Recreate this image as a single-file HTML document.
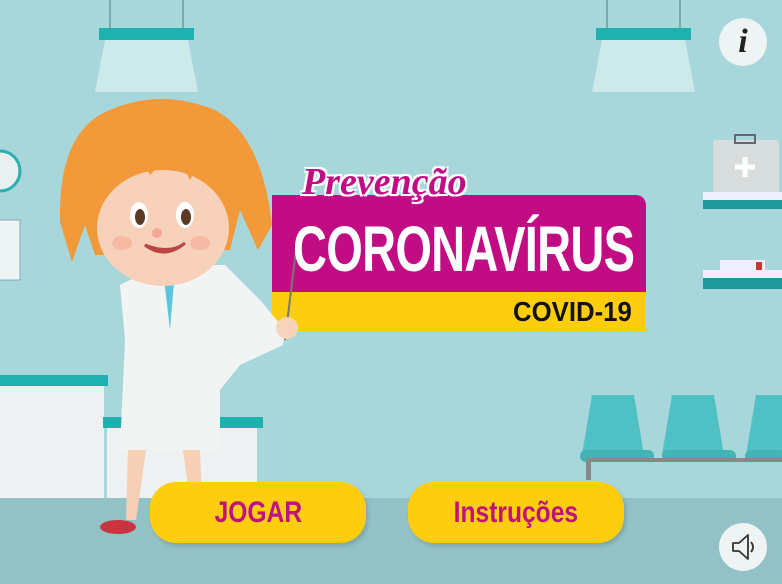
<!DOCTYPE html>
<html><head><meta charset="utf-8"><style>
body{margin:0;width:782px;height:584px;overflow:hidden;background:#a7d7da;position:relative;font-family:"Liberation Sans",sans-serif}
.a{position:absolute}
.btn{position:absolute;top:482px;width:216px;height:61px;background:#fecd0e;border-radius:26px;color:#c0127f;font-weight:bold;font-size:30px;text-align:center;line-height:61px;box-shadow:2px 3px 4px rgba(0,0,0,.15)}
.btn span{display:inline-block;transform:scaleX(.82)}
.circ{position:absolute;width:48px;height:48px;border-radius:50%;background:#eef3f3}
</style></head><body>
<div class="a" style="left:0;top:498px;width:782px;height:86px;background:#93c2c6"></div>
<svg class="a" style="left:0;top:0" width="782" height="584">
<g stroke="#7aa" stroke-width="2"><line x1="110" y1="0" x2="110" y2="30"/><line x1="183" y1="0" x2="183" y2="30"/><line x1="607" y1="0" x2="607" y2="30"/><line x1="680" y1="0" x2="680" y2="30"/></g>
<rect x="99" y="28" width="95" height="12" fill="#1fb0b0"/><polygon points="105,40 188,40 198,92 95,92" fill="#d7efef" opacity=".8"/>
<rect x="596" y="28" width="95" height="12" fill="#1fb0b0"/><polygon points="602,40 685,40 695,92 592,92" fill="#d7efef" opacity=".8"/>
<circle cx="0" cy="171" r="20" fill="#e8f0f0" stroke="#2ab0b0" stroke-width="3"/>
<rect x="-2" y="220" width="22" height="60" fill="#eef3f3" stroke="#8ab" stroke-width="1"/>
<rect x="0" y="375" width="108" height="11" fill="#1fb0b0"/><rect x="0" y="386" width="104" height="112" fill="#eef1f1"/>
<rect x="103" y="417" width="160" height="11" fill="#1fb0b0"/><rect x="107" y="428" width="150" height="70" fill="#eef1f1"/>
<rect x="713" y="140" width="66" height="56" rx="3" fill="#d7dcdc"/><rect x="735" y="135" width="20" height="8" fill="none" stroke="#667" stroke-width="2"/>
<path d="M745 157v20M735 167h20" stroke="#fff" stroke-width="5"/>
<rect x="703" y="192" width="79" height="8" fill="#eef"/><rect x="703" y="200" width="79" height="9" fill="#1e9898"/>
<rect x="720" y="260" width="45" height="12" fill="#eef"/><rect x="756" y="262" width="6" height="10" fill="#c33"/>
<rect x="703" y="270" width="79" height="8" fill="#eef"/><rect x="703" y="278" width="79" height="11" fill="#1e9898"/>
<g fill="#4fc0c3"><path d="M592 395h42l10 60h-62z"/><path d="M672 395h42l10 60h-62z"/><path d="M756 395h30v60h-40z"/></g>
<g fill="#44b3b6"><rect x="580" y="450" width="74" height="12" rx="6"/><rect x="662" y="450" width="74" height="12" rx="6"/><rect x="745" y="450" width="40" height="12" rx="6"/></g>
<rect x="586" y="458" width="200" height="4" fill="#888"/><rect x="586" y="458" width="5" height="22" fill="#888"/>
<rect x="272" y="195" width="374" height="136" rx="10" fill="#c10c84"/>
<rect x="272" y="292" width="374" height="39" fill="#fecd0e"/>
<rect x="272" y="195" width="20" height="20" fill="#c10c84"/>
<line x1="285" y1="340" x2="296" y2="250" stroke="#777" stroke-width="2"/>
<path d="M120 285 L160 265 L225 265 L260 300 L285 330 L283 345 L240 365 L220 390 L220 450 L120 450 L125 340Z" fill="#f2f4f4"/>
<path d="M163 270 L170 330 L175 270Z" fill="#5bc6e0"/>
<rect x="168" y="265" width="12" height="8" fill="#d65"/>
<path d="M128 450h18l-10 70h-10zM183 450h17l2 50h-12z" fill="#f6cfb5"/>
<ellipse cx="118" cy="527" rx="18" ry="7" fill="#c9343f"/>
<circle cx="287" cy="328" r="11" fill="#f8d3bb"/>
<path d="M60 222 Q58 130 110 110 Q160 88 215 110 Q262 135 272 225 L258 250 L240 210 L230 250 L95 255 L85 225 L72 262Z" fill="#f29a3a"/>
<ellipse cx="163" cy="228" rx="66" ry="58" fill="#f7d1b9"/>
<path d="M98 205 Q105 130 165 125 Q232 128 236 205 Q222 170 200 160 L190 180 L175 150 L150 175 L140 155 Q115 170 98 205Z" fill="#f29a3a"/>
<ellipse cx="139" cy="215" rx="9" ry="13" fill="#fff"/><ellipse cx="140" cy="217" rx="5" ry="8" fill="#5a3a22"/>
<ellipse cx="185" cy="215" rx="9" ry="13" fill="#fff"/><ellipse cx="186" cy="217" rx="5" ry="8" fill="#5a3a22"/>
<path d="M145 245 Q165 260 185 243 Q170 255 145 245Z" fill="#fff" stroke="#b44" stroke-width="3"/>
<circle cx="157" cy="233" r="5" fill="#f4a896"/>
<ellipse cx="122" cy="243" rx="10" ry="7" fill="#f4a896" opacity=".6"/><ellipse cx="200" cy="243" rx="10" ry="7" fill="#f4a896" opacity=".6"/>
</svg>
<div class="a" style="left:302px;top:160px;font-family:'Liberation Serif',serif;font-style:italic;font-weight:bold;font-size:38px;color:#c10c84;text-shadow:0 0 3px #fff,0 0 3px #fff,2px 2px 0 #fff,-2px -2px 0 #fff,2px -2px 0 #fff,-2px 2px 0 #fff">Prevenção</div>
<div class="a" style="left:293px;top:214px;font-weight:bold;font-size:64px;line-height:70px;color:#fff;letter-spacing:-1px;transform:scaleX(.735);transform-origin:left;white-space:nowrap">CORONAVÍRUS</div>
<div class="a" style="left:513px;top:294px;font-weight:bold;font-size:28px;line-height:36px;color:#111;transform:scaleX(.92);transform-origin:left">COVID-19</div>
<div class="btn" style="left:150px"><span>JOGAR</span></div>
<div class="btn" style="left:408px"><span>Instruções</span></div>
<div class="circ" style="left:719px;top:18px;text-align:center;line-height:48px;font-family:'Liberation Serif',serif;font-style:italic;font-weight:bold;font-size:34px;color:#222">i</div>
<div class="circ" style="left:719px;top:523px"><svg width="48" height="48"><path d="M14 20h6l9-8v24l-9-8h-6z" fill="none" stroke="#333" stroke-width="1.8" stroke-linejoin="round"/><path d="M32 19q4 5 0 10" fill="none" stroke="#333" stroke-width="1.8"/></svg></div>
</body></html>
